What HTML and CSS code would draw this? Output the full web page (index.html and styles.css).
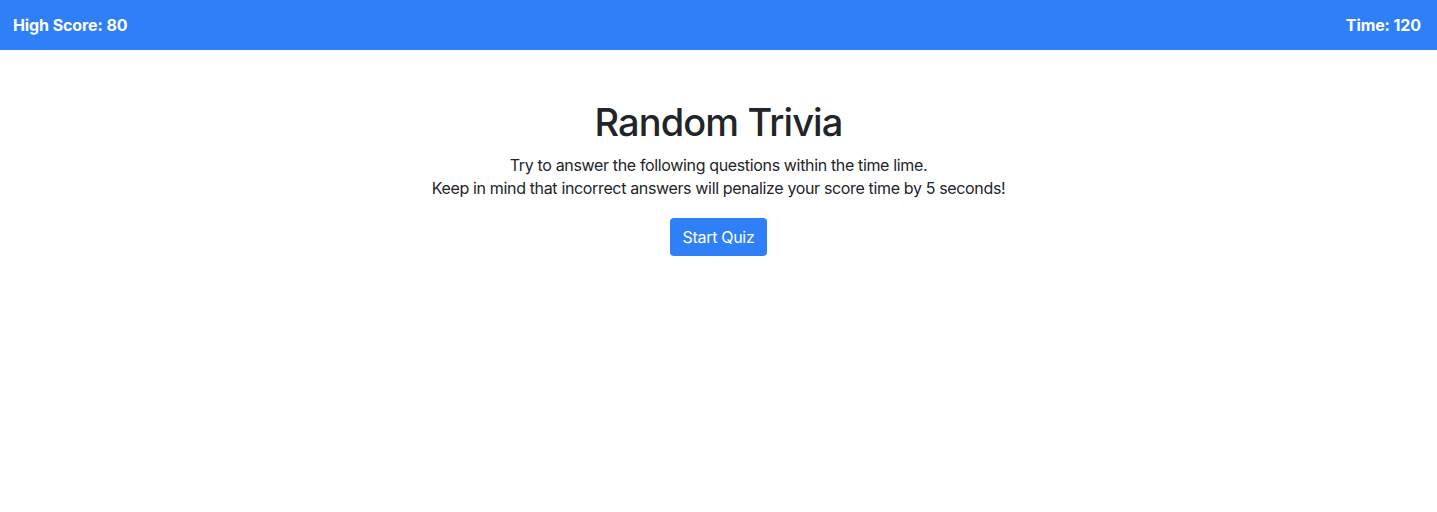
FILE: index.html
```html
<!DOCTYPE html>
<html lang="en">
<head>
<meta charset="utf-8">
<title>Random Trivia</title>
<link rel="stylesheet" href="styles.css">
</head>
<body>
<header class="topbar">
  <span class="stat">High Score: 80</span>
  <span class="stat">Time: 120</span>
</header>
<main class="intro">
  <h1 class="title">Random Trivia</h1>
  <p class="lead">Try to answer the following questions within the time lime.<br>Keep in mind that incorrect answers will penalize your score time by 5 seconds!</p>
  <button class="btn-start" type="button">Start Quiz</button>
</main>
</body>
</html>
```

FILE: styles.css
```css
* { box-sizing: border-box; }
body {
  margin: 0;
  font-family: Inter, "Noto Sans", "Liberation Sans", sans-serif;
  color: #212529;
  background: #fff;
}
.topbar {
  height: 50px;
  background: #2f7ff6;
  color: #fff;
  display: flex;
  align-items: center;
  justify-content: space-between;
  padding: 0 16px 0 13px;
}
.stat {
  font-weight: 700;
  font-size: 16px;
  letter-spacing: -0.1px;
}
.intro {
  display: flex;
  flex-direction: column;
  align-items: center;
  text-align: center;
  padding-top: 48px;
}
.title {
  margin: 0 0 8px;
  font-size: 38px;
  font-weight: 500;
  line-height: 48px;
  letter-spacing: -0.9px;
}
.lead {
  margin: 0 0 18px;
  font-size: 16px;
  line-height: 23px;
  letter-spacing: -0.35px;
}
.btn-start {
  font-family: inherit;
  font-size: 16px;
  letter-spacing: -0.3px;
  color: #fff;
  background: #2f7ff6;
  border: none;
  border-radius: 4px;
  height: 38px;
  padding: 0 13px;
  line-height: 24px;
}
```
